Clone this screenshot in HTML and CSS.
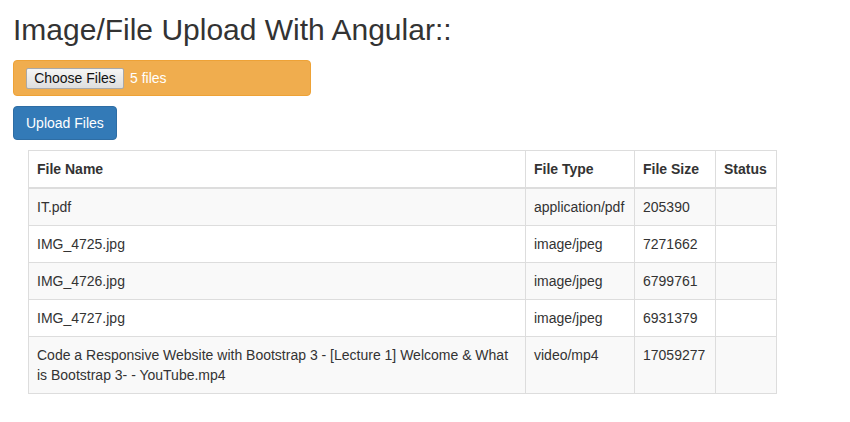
FILE: index.html
```html
<!DOCTYPE html>
<html lang="en">
<head>
  <meta charset="UTF-8" />
  <title>Image/File Upload With Angular</title>
  <link rel="stylesheet" href="styles.css">
</head>
<body>
  <div class="container">
    <h2>Image/File Upload With Angular::</h2>

    <div class="file-box">
      <span class="choose-btn">Choose Files</span>
      <span class="file-count">5 files</span>
    </div>

    <button type="button" class="btn-upload">Upload Files</button>

    <table class="files">
      <colgroup>
        <col class="c-name">
        <col class="c-type">
        <col class="c-size">
        <col class="c-status">
      </colgroup>
      <thead>
        <tr>
          <th>File Name</th>
          <th>File Type</th>
          <th>File Size</th>
          <th>Status</th>
        </tr>
      </thead>
      <tbody>
        <tr>
          <td>IT.pdf</td>
          <td>application/pdf</td>
          <td>205390</td>
          <td></td>
        </tr>
        <tr>
          <td>IMG_4725.jpg</td>
          <td>image/jpeg</td>
          <td>7271662</td>
          <td></td>
        </tr>
        <tr>
          <td>IMG_4726.jpg</td>
          <td>image/jpeg</td>
          <td>6799761</td>
          <td></td>
        </tr>
        <tr>
          <td>IMG_4727.jpg</td>
          <td>image/jpeg</td>
          <td>6931379</td>
          <td></td>
        </tr>
        <tr>
          <td>Code a Responsive Website with Bootstrap 3 - [Lecture 1] Welcome &amp; What is Bootstrap 3- - YouTube.mp4</td>
          <td>video/mp4</td>
          <td>17059277</td>
          <td></td>
        </tr>
      </tbody>
    </table>
  </div>
</body>
</html>
```

FILE: styles.css
```css
* { box-sizing: border-box; }
body {
  margin: 0; padding: 0;
  font-family: "Liberation Sans", Arial, sans-serif;
  font-size: 14px; line-height: 20px; color: #333;
  background: #fff;
}
.container {
  display: flex; flex-direction: column; align-items: flex-start;
  padding: 0 13px;
}
h2 {
  margin: 13px 0 14px; font-size: 30px; line-height: 33px;
  font-weight: 500; color: #333;
}
.file-box {
  display: flex; align-items: center; gap: 6px;
  width: 298px; height: 36px; padding: 0 12px;
  background: #f0ad4e; border: 1px solid #eea236; border-radius: 4px;
}
.choose-btn {
  display: inline-block; width: 98px; height: 21px; padding: 0;
  text-align: center;
  font-size: 14px; line-height: 19px; color: #111;
  background: linear-gradient(#f6f6f6, #dedede);
  border: 1px solid #a9a9a9; border-radius: 2px;
}
.file-count { color: #fff; font-size: 14px; }
.btn-upload {
  margin-top: 10px; height: 34px; padding: 6px 12px;
  font-family: inherit; font-size: 14px; line-height: 20px;
  color: #fff; background: #337ab7;
  border: 1px solid #2e6da4; border-radius: 4px;
}
.files {
  margin: 10px 0 0 15px; width: 748px;
  table-layout: fixed; border-collapse: collapse;
  border: 1px solid #ddd;
}
.c-name { width: 497px; }
.c-type { width: 109px; }
.c-size { width: 81px; }
.c-status { width: 61px; }
.files th, .files td {
  padding: 8px; text-align: left; vertical-align: top;
  border: 1px solid #ddd;
}
.files th { font-weight: bold; border-bottom-width: 2px; }
.files tbody tr:nth-child(odd) { background: #f9f9f9; }
```
